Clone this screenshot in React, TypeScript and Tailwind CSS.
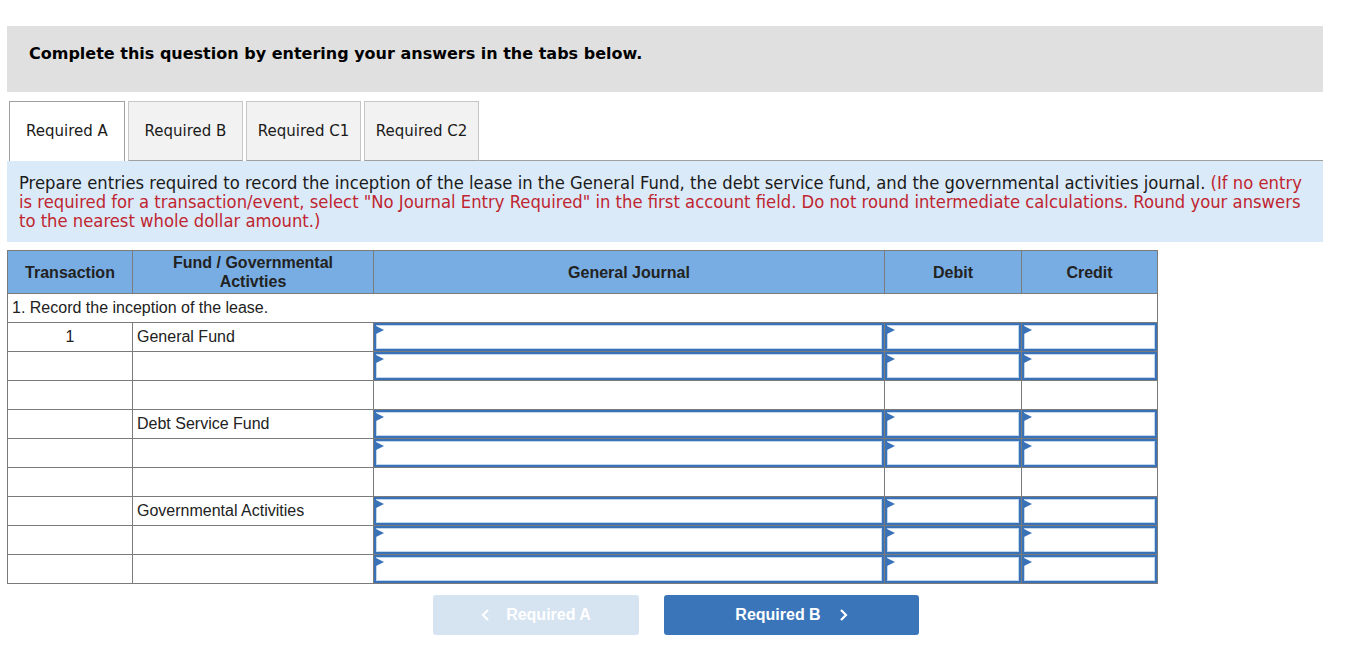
import React from "react";

type Row = {
  txn?: string;
  fund?: string;
  inputs: boolean;
};

const rows: Row[] = [
  { txn: "1", fund: "General Fund", inputs: true },
  { inputs: true },
  { inputs: false },
  { fund: "Debt Service Fund", inputs: true },
  { inputs: true },
  { inputs: false },
  { fund: "Governmental Activities", inputs: true },
  { inputs: true },
  { inputs: true },
];

const tabs = ["Required A", "Required B", "Required C1", "Required C2"];

function InputCell() {
  return (
    <td className="p-0 h-[29px] border border-[#7b7b7b]">
      <div className="relative h-[28px] border-2 border-[#3a72b8] bg-white">
        <div className="h-full border border-[#c2d7ef]" />
        {/* little flag in the corner */}
        <div className="absolute left-0 top-[1px] w-0 h-0 border-y-[4px] border-y-transparent border-l-[8px] border-l-[#3a72b8]" />
      </div>
    </td>
  );
}

export default function App() {
  return (
    <div className="w-[1352px] h-[648px] bg-white font-['Liberation_Sans',Arial,sans-serif]">
      <div className="pl-[7px] pt-[26px] w-[1323px]">
        {/* Header */}
        <div className="h-[66px] bg-[#e0e0e0] pl-[22px] pt-[17px]">
          <h2 className="font-['DejaVu_Sans',Verdana,sans-serif] font-bold text-[16px] leading-[22px] text-black">
            Complete this question by entering your answers in the tabs below.
          </h2>
        </div>

        {/* Tabs */}
        <div className="mt-[9px] flex items-end pl-[2px]">
          {tabs.map((t, i) =>
            i === 0 ? (
              <div
                key={t}
                className="w-[116px] h-[60px] bg-white border border-b-0 border-[#a0a0a0] flex items-center justify-center font-['DejaVu_Sans',Verdana,sans-serif] text-[15px] text-[#1a1a1a]"
              >
                {t}
              </div>
            ) : (
              <div
                key={t}
                className="ml-[3px] w-[115px] h-[60px] bg-[#f2f2f2] border border-[#c6c6c6] border-b-[#a0a0a0] flex items-center justify-center font-['DejaVu_Sans',Verdana,sans-serif] text-[15px] text-[#1a1a1a]"
              >
                {t}
              </div>
            )
          )}
          <div className="flex-1 border-b border-[#a0a0a0]" />
        </div>

        {/* Instructions */}
        <div className="bg-[#dbeaf8] px-[12px] pt-[12px] pb-[12px] font-['DejaVu_Sans_Condensed','DejaVu_Sans',sans-serif] text-[18.25px] leading-[19px] text-[#1a1a1a]">
          Prepare entries required to record the inception of the lease in the General Fund, the debt
          service fund, and the governmental activities journal.{" "}
          <span className="text-[#bf2530]">
            (If no entry is required for a transaction/event, select "No Journal Entry Required" in
            the first account field. Do not round intermediate calculations. Round your answers to
            the nearest whole dollar amount.)
          </span>
        </div>

        {/* Journal table */}
        <table className="mt-[8px] w-[1150px] border-collapse table-fixed text-[16px] text-[#222]">
          <colgroup>
            <col className="w-[125px]" />
            <col className="w-[241px]" />
            <col className="w-[511px]" />
            <col className="w-[137px]" />
            <col className="w-[136px]" />
          </colgroup>
          <thead>
            <tr className="bg-[#78ade3] h-[43px] font-bold leading-[19px]">
              <th className="border border-[#7b7b7b]">Transaction</th>
              <th className="border border-[#7b7b7b]">
                Fund / Governmental
                <br />
                Activties
              </th>
              <th className="border border-[#7b7b7b]">General Journal</th>
              <th className="border border-[#7b7b7b]">Debit</th>
              <th className="border border-[#7b7b7b]">Credit</th>
            </tr>
          </thead>
          <tbody>
            <tr className="h-[29px]">
              <td colSpan={5} className="border border-[#7b7b7b] px-[4px]">
                1. Record the inception of the lease.
              </td>
            </tr>
            {rows.map((r, i) => (
              <tr key={i} className="h-[29px]">
                <td className="border border-[#7b7b7b] text-center">{r.txn ?? ""}</td>
                <td className="border border-[#7b7b7b] px-[4px]">{r.fund ?? ""}</td>
                {r.inputs ? (
                  <>
                    <InputCell />
                    <InputCell />
                    <InputCell />
                  </>
                ) : (
                  <>
                    <td className="border border-[#7b7b7b]" />
                    <td className="border border-[#7b7b7b]" />
                    <td className="border border-[#7b7b7b]" />
                  </>
                )}
              </tr>
            ))}
          </tbody>
        </table>
      </div>

      {/* Nav buttons */}
      <div className="mt-[11px] flex justify-center gap-[25px]">
        <button className="w-[206px] h-[40px] rounded-[3px] bg-[#d6e3f1] text-white font-bold text-[16px] flex items-center justify-center gap-[16px]">
          <svg width="9" height="14" viewBox="0 0 9 14" fill="none">
            <path d="M7 2L2 7l5 5" stroke="white" strokeWidth="2.2" />
          </svg>
          Required A
        </button>
        <button className="w-[255px] h-[40px] rounded-[3px] bg-[#3a75b9] text-white font-bold text-[16px] flex items-center justify-center gap-[18px]">
          Required B
          <svg width="9" height="14" viewBox="0 0 9 14" fill="none">
            <path d="M2 2l5 5-5 5" stroke="white" strokeWidth="2.2" />
          </svg>
        </button>
      </div>
    </div>
  );
}
